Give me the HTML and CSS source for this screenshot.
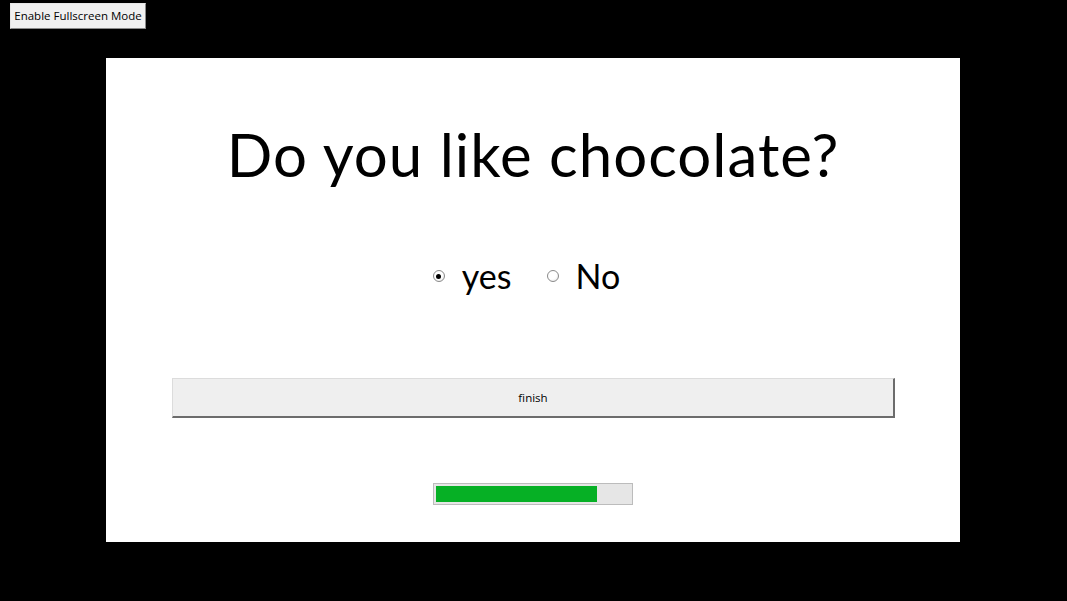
FILE: index.html
```html
<!DOCTYPE html>
<html>
<head>
<meta charset="utf-8">
<link rel="stylesheet" href="styles.css">
</head>
<body>
<div class="page">
  <button class="fs-btn">Enable Fullscreen Mode</button>
  <main class="panel">
    <h1 class="question">Do you like chocolate?</h1>
    <div class="choices">
      <label class="choice"><input type="radio" name="q" class="radio" checked><span class="choice-text">yes</span></label>
      <label class="choice"><input type="radio" name="q" class="radio"><span class="choice-text">No</span></label>
    </div>
    <button class="finish">finish</button>
    <div class="progress"><div class="progress-fill" style="width:161px"></div></div>
  </main>
</div>
</body>
</html>
```

FILE: styles.css
```css
html, body {
  margin: 0;
  padding: 0;
  background: #000;
}
.page {
  width: 1067px;
  height: 601px;
  display: flex;
  flex-direction: column;
  align-items: flex-start;
  background: #000;
}
.fs-btn {
  margin: 3px 0 0 10px;
  width: 136px;
  height: 26px;
  padding: 0;
  box-sizing: border-box;
  background: #f0f0f0;
  border-style: solid;
  border-width: 1px;
  border-color: #e6e6e6 #8a8a8a #8a8a8a #e6e6e6;
  font-family: "Open Sans", "Noto Sans", sans-serif;
  font-size: 11.5px;
  color: #000;
  line-height: 24px;
}
.panel {
  margin: 29px 0 0 106px;
  width: 854px;
  height: 484px;
  background: #fff;
  box-sizing: border-box;
  padding-top: 48px;
  display: flex;
  flex-direction: column;
  align-items: center;
}
.question {
  margin: 0;
  height: 96px;
  line-height: 96px;
  font-family: Lato, "Open Sans", sans-serif;
  font-weight: 400;
  font-size: 60px;
  letter-spacing: 1px;
  color: #000;
  white-space: nowrap;
}
.choices {
  margin-top: 54px;
  height: 40px;
  display: flex;
  align-items: center;
  padding-right: 13px;
  gap: 35px;
}
.choice {
  display: flex;
  align-items: center;
  gap: 17px;
  height: 40px;
}
.radio {
  appearance: none;
  -webkit-appearance: none;
  margin: 0;
  width: 12px;
  height: 12px;
  border-radius: 50%;
  border: 1px solid #8a8a8a;
  background: radial-gradient(circle at 40% 35%, #fff 0, #fff 50%, #e0e0e0 100%);
  box-sizing: border-box;
  position: relative;
}
.radio:checked::after {
  content: "";
  position: absolute;
  left: 2.5px;
  top: 2.5px;
  width: 5px;
  height: 5px;
  border-radius: 50%;
  background: #000;
}
.choice-text {
  font-family: Lato, "Open Sans", sans-serif;
  font-size: 34px;
  line-height: 40px;
  color: #000;
}
.finish {
  margin-top: 82px;
  align-self: flex-start;
  margin-left: 66px;
  width: 723px;
  height: 40px;
  box-sizing: border-box;
  background: #efefef;
  border-style: solid;
  border-width: 1px 2px 2px 1px;
  border-color: #dcdcdc #6c6c6c #6c6c6c #dcdcdc;
  font-family: "Open Sans", "Noto Sans", sans-serif;
  font-size: 11.5px;
  color: #000;
  padding: 0;
}
.progress {
  margin-top: 65px;
  width: 200px;
  height: 22px;
  box-sizing: border-box;
  border: 1px solid #bcbcbc;
  background: #e6e6e6;
  padding: 2px;
}
.progress-fill {
  height: 16px;
  background: #06b025;
}
```
